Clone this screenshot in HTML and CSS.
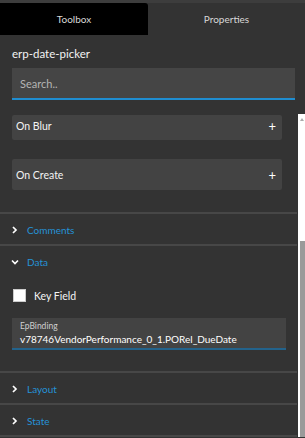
FILE: index.html
```html
<!DOCTYPE html>
<html lang="en">
<head>
  <meta charset="UTF-8" />
  <meta name="viewport" content="width=device-width, initial-scale=1.0" />
  <title>Properties panel</title>
  <link rel="stylesheet" href="styles.css">
</head>
<body>
  <!-- tabs -->
  <div class="tabs">
    <div class="tab active">Toolbox</div>
    <div class="tab">Properties</div>
  </div>

  <div class="panel-head">
    <div class="comp-name">erp-date-picker</div>
    <input class="search" type="text" placeholder="Search..">
  </div>

  <!-- scrolling property list -->
  <div class="scroll-area">
    <div class="scroll-content">
      <div class="events">
        <div class="event-card first"><span>On Blur</span><span class="plus">+</span></div>
        <div class="event-card"><span>On Create</span><span class="plus">+</span></div>
      </div>

      <div class="section">
        <div class="section-head">
          <svg class="chev" width="8" height="8" viewBox="0 0 8 8"><polyline points="2,1 5,4 2,7" /></svg>Comments
        </div>
      </div>

      <div class="section">
        <div class="section-head">
          <svg class="chev" width="8" height="8" viewBox="0 0 8 8"><polyline points="1,2.5 4,5.5 7,2.5" /></svg>Data
        </div>
        <div class="section-body">
          <label class="check-row"><span class="checkbox"></span>Key Field</label>
          <div class="field">
            <div class="field-label">EpBinding</div>
            <div class="field-value">v78746VendorPerformance_0_1.PORel_DueDate</div>
          </div>
        </div>
      </div>

      <div class="section">
        <div class="section-head">
          <svg class="chev" width="8" height="8" viewBox="0 0 8 8"><polyline points="2,1 5,4 2,7" /></svg>Layout
        </div>
      </div>

      <div class="section">
        <div class="section-head">
          <svg class="chev" width="8" height="8" viewBox="0 0 8 8"><polyline points="2,1 5,4 2,7" /></svg>State
        </div>
      </div>
    </div>

    <div class="scrollbar">
      <div class="arrow-up"></div>
      <div class="thumb"></div>
    </div>
  </div>
</body>
</html>
```

FILE: styles.css
```css
* { margin: 0; padding: 0; box-sizing: border-box; }
html, body {
  width: 100%; height: 100%;
  overflow: hidden;
  background: #333;
  color: #f2f2f2;
  font-family: Lato, 'Noto Sans', sans-serif;
  font-size: 10px;
}

/* tabs */
.tabs {
  display: flex;
  height: 35px;
  border-top: 3px solid #3d3d3d;
}
.tab {
  flex: 1;
  display: flex; align-items: center; justify-content: center;
  color: #d8d8d8;
  font-size: 10px;
}
.tab.active {
  flex: 0 0 148px;
  background: #000;
  border-top-right-radius: 3px;
}

/* header */
.panel-head { padding: 9px 10px 0 12px; }
.comp-name { font-size: 11.5px; color: #f4f4f4; height: 24px; line-height: 20px; }
.search {
  display: block;
  width: 100%;
  height: 32px;
  background: #454545;
  border: none;
  border-bottom: 2px solid #1f8dd0;
  padding: 0 8px;
  color: #eee;
  font: inherit;
  font-size: 11px;
  outline: none;
}
.search::placeholder { color: #b4b4b4; }

/* scroll area */
.scroll-area {
  display: flex;
  margin-top: 14px;
  height: 323px;
  overflow: hidden;
}
.scroll-content { flex: 1; min-width: 0; }

.events { padding: 0 15px 0 12px; }
.event-card {
  display: flex; align-items: center; justify-content: space-between;
  height: 31px;
  padding: 0 6px 0 4px;
  background: #434343;
  border-radius: 2px;
  color: #f4f4f4;
  font-size: 10.5px;
  margin-bottom: 19px;
}
.event-card.first { height: 25px; padding-bottom: 4px; margin-top: 1px; }
.event-card:last-child { margin-bottom: 22px; }
.plus { font-size: 13px; color: #fff; }

.section { border-top: 2px solid #474747; }
.section:last-child { border-bottom: 2px solid #474747; }
.section-head {
  display: flex; align-items: center;
  height: 30px;
  padding-left: 11px;
  color: #2592d6;
  padding-top: 2px;
}
.chev {
  margin-right: 8px;
  fill: none;
  stroke: #fff;
  stroke-width: 1.7;
}

.section-body { padding: 12px 11px 21px 13px; }
.check-row {
  display: flex; align-items: center;
  gap: 8px;
  color: #f4f4f4;
  font-size: 10.5px;
  margin-bottom: 16px;
  padding-top: 1px;
}
.checkbox {
  width: 13px; height: 13px;
  background: #fff;
  border: 1px solid #ccc;
}
.field {
  background: #434343;
  border-bottom: 2px solid #23638c;
  height: 32px;
  margin-left: -1px;
  padding: 3px 8px 0;
  overflow: hidden;
}
.field-label { font-size: 8.5px; color: #d0d0d0; line-height: 11px; }
.field-value { font-size: 10px; color: #fff; line-height: 15px; white-space: nowrap; }

/* scrollbar */
.scrollbar {
  flex: 0 0 7px;
  display: flex; flex-direction: column;
  background: #fff;
  margin-left: 1px;
}
.arrow-up {
  width: 0; height: 0;
  margin: 4px 0 0 2px;
  border-left: 2px solid transparent;
  border-right: 2px solid transparent;
  border-bottom: 3px solid #aaa;
}
.thumb { margin-top: 120px; flex: 1; background: #9a9a9a; margin-left: 2px; }
```
